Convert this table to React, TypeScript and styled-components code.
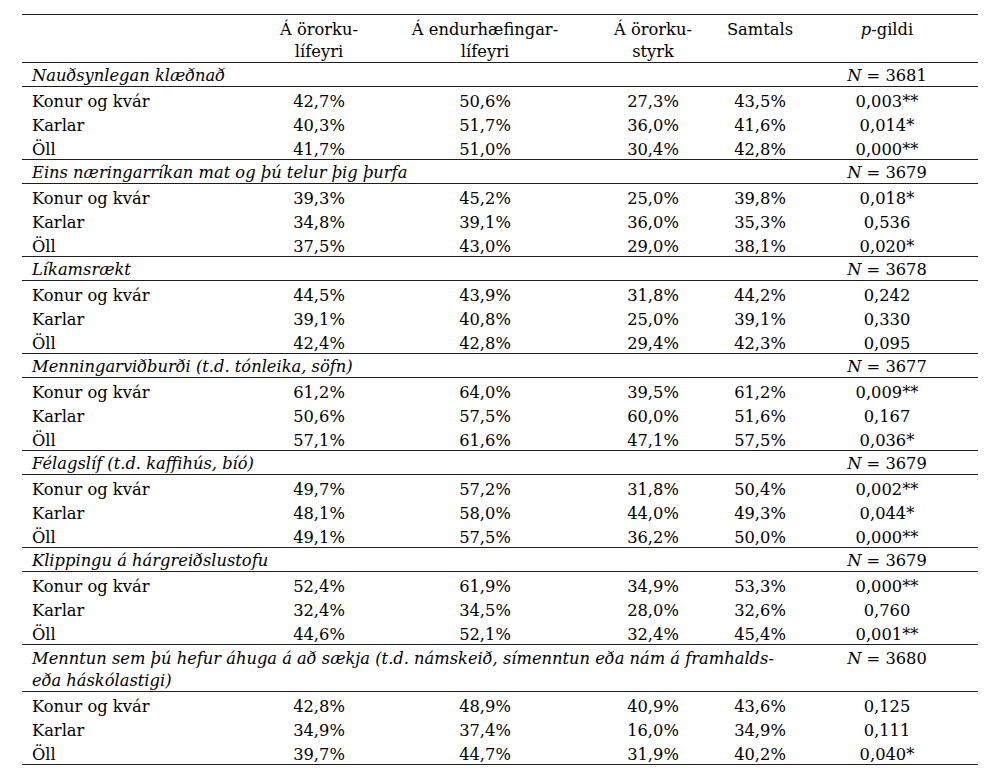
import * as React from 'react'
import styled, { createGlobalStyle } from 'styled-components'

type Section = {
  title: React.ReactNode
  n: number
  wide?: boolean
  rows: string[][]
}

const groups = ['Konur og kvár', 'Karlar', 'Öll']

const sections: Section[] = [
  {
    title: 'Nauðsynlegan klæðnað',
    n: 3681,
    rows: [
      ['42,7%', '50,6%', '27,3%', '43,5%', '0,003**'],
      ['40,3%', '51,7%', '36,0%', '41,6%', '0,014*'],
      ['41,7%', '51,0%', '30,4%', '42,8%', '0,000**']
    ]
  },
  {
    title: 'Eins næringarríkan mat og þú telur þig þurfa',
    n: 3679,
    rows: [
      ['39,3%', '45,2%', '25,0%', '39,8%', '0,018*'],
      ['34,8%', '39,1%', '36,0%', '35,3%', '0,536'],
      ['37,5%', '43,0%', '29,0%', '38,1%', '0,020*']
    ]
  },
  {
    title: 'Líkamsrækt',
    n: 3678,
    rows: [
      ['44,5%', '43,9%', '31,8%', '44,2%', '0,242'],
      ['39,1%', '40,8%', '25,0%', '39,1%', '0,330'],
      ['42,4%', '42,8%', '29,4%', '42,3%', '0,095']
    ]
  },
  {
    title: 'Menningarviðburði (t.d. tónleika, söfn)',
    n: 3677,
    rows: [
      ['61,2%', '64,0%', '39,5%', '61,2%', '0,009**'],
      ['50,6%', '57,5%', '60,0%', '51,6%', '0,167'],
      ['57,1%', '61,6%', '47,1%', '57,5%', '0,036*']
    ]
  },
  {
    title: 'Félagslíf (t.d. kaffihús, bíó)',
    n: 3679,
    rows: [
      ['49,7%', '57,2%', '31,8%', '50,4%', '0,002**'],
      ['48,1%', '58,0%', '44,0%', '49,3%', '0,044*'],
      ['49,1%', '57,5%', '36,2%', '50,0%', '0,000**']
    ]
  },
  {
    title: 'Klippingu á hárgreiðslustofu',
    n: 3679,
    rows: [
      ['52,4%', '61,9%', '34,9%', '53,3%', '0,000**'],
      ['32,4%', '34,5%', '28,0%', '32,6%', '0,760'],
      ['44,6%', '52,1%', '32,4%', '45,4%', '0,001**']
    ]
  },
  {
    title: (
      <>
        Menntun sem þú hefur áhuga á að sækja (t.d. námskeið, símenntun eða nám á framhalds-
        <br />
        eða háskólastigi)
      </>
    ),
    n: 3680,
    wide: true,
    rows: [
      ['42,8%', '48,9%', '40,9%', '43,6%', '0,125'],
      ['34,9%', '37,4%', '16,0%', '34,9%', '0,111'],
      ['39,7%', '44,7%', '31,9%', '40,2%', '0,040*']
    ]
  }
]

const App: React.FunctionComponent = () => (
  <Page>
    <GlobalStyle />
    <Table>
      <colgroup>
        <col style={{ width: 228 }} />
        <col style={{ width: 138 }} />
        <col style={{ width: 194 }} />
        <col style={{ width: 142 }} />
        <col style={{ width: 72 }} />
        <col style={{ width: 182 }} />
      </colgroup>
      <thead>
        <tr>
          <HeadCell />
          <HeadCell>
            Á örorku-
            <br />
            lífeyri
          </HeadCell>
          <HeadCell>
            Á endurhæfingar-
            <br />
            lífeyri
          </HeadCell>
          <HeadCell>
            Á örorku-
            <br />
            styrk
          </HeadCell>
          <HeadCell>Samtals</HeadCell>
          <HeadCell>
            <Em>p</Em>-gildi
          </HeadCell>
        </tr>
      </thead>
      {sections.map((s, i) => (
        <Group key={i}>
          <tr>
            <TitleCell colSpan={5} $wide={s.wide}>
              {s.title}
            </TitleCell>
            <NCell $wide={s.wide}>
              <Em>N</Em> = {s.n}
            </NCell>
          </tr>
          {s.rows.map((r, j) => (
            <tr key={j}>
              <LabelCell>{groups[j]}</LabelCell>
              {r.map((v, k) => (
                <ValueCell key={k}>{v}</ValueCell>
              ))}
            </tr>
          ))}
        </Group>
      ))}
    </Table>
  </Page>
)

export { App as default }

// only DejaVu Serif resolves to a real serif face here
const serif = `"DejaVu Serif", serif`

const GlobalStyle = createGlobalStyle`
  body {
    margin: 0;
    background: #fff;
  }
`

const Page = styled.div`
  padding: 14px 22px;
  color: #000;
`

const Table = styled.table`
  width: 956px;
  table-layout: fixed;
  border-collapse: separate;
  border-spacing: 0;
  font-family: ${serif};
  font-size: 16.3px;
  color: #000;
`

const Em = styled.i`
  font-style: italic;
`

const HeadCell = styled.th`
  font-weight: normal;
  text-align: center;
  vertical-align: top;
  padding: 4px 0 0;
  line-height: 21.5px;
  border-top: 1px solid #1e1e1e;
  border-bottom: 1px solid #1e1e1e;
  white-space: nowrap;
`

const Group = styled.tbody`
  tr:last-child td {
    border-bottom: 1px solid #1e1e1e;
  }
`

const TitleCell = styled.td<{ $wide?: boolean }>`
  font-style: italic;
  padding: 3px 10px 0;
  line-height: ${(p) => (p.$wide ? '21.5px' : '20px')};
  border-bottom: 1px solid #1e1e1e;
  vertical-align: top;
  white-space: nowrap;
`

const NCell = styled.td<{ $wide?: boolean }>`
  text-align: center;
  padding: 3px 0 0;
  line-height: ${(p) => (p.$wide ? '21.5px' : '20px')};
  border-bottom: 1px solid #1e1e1e;
  vertical-align: top;
  white-space: nowrap;
`

const LabelCell = styled.td`
  padding: 6px 10px 0;
  line-height: 18px;
  white-space: nowrap;
`

const ValueCell = styled.td`
  text-align: center;
  padding: 6px 0 0;
  line-height: 18px;
  white-space: nowrap;
`
